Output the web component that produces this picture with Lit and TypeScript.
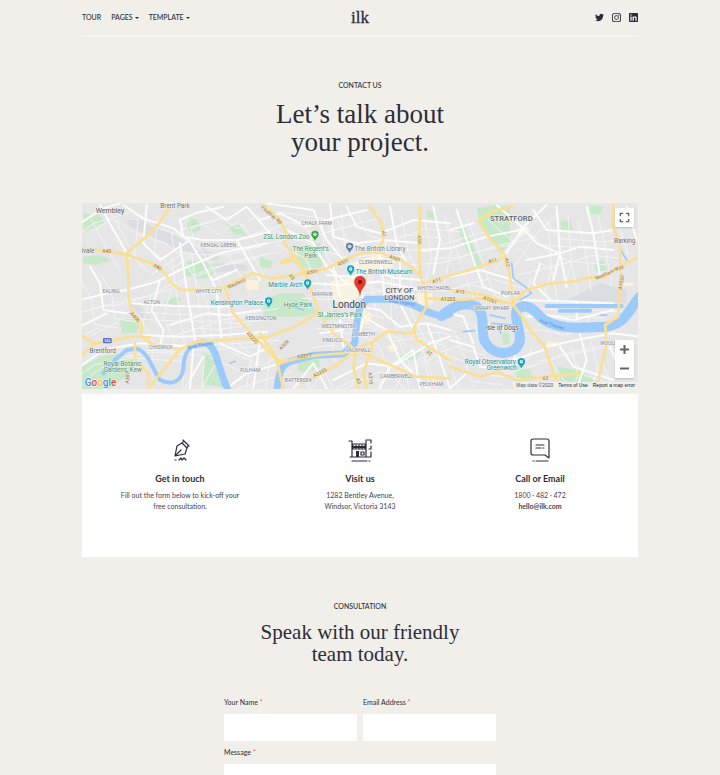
import { LitElement, html, svg, css } from "lit";
import { customElement } from "lit/decorators.js";

type Label = [text: string, x: number, y: number, kind: string, angle?: number];

const mainRoads = [
  "M270 20 L240 65 L205 105 L140 160 L145 230 L145 290 L160 345 L185 375 L182 405 L210 430 L300 448",
  "M0 145 L60 150 L135 163 L230 195 L255 220 L270 245 L300 270 L380 268 L435 262 L485 235 L520 220 L575 236 L640 226 L740 206 L790 180 L850 158 L900 158 L970 184 L1020 225 L1036 268 L1040 320 L1000 385 L1010 420 L1110 480",
  "M435 265 L460 340 L500 385 L590 480 L610 565",
  "M0 405 L45 430 L80 425 L160 408 L210 412 M0 470 L45 430",
  "M205 565 L300 448 L350 425 L420 420 L560 412 L640 382 L705 345 L720 330",
  "M165 430 L165 480 L205 520 L205 555",
  "M556 20 L596 55 L618 95 L612 130 L650 175 L680 230 L700 290 L720 345 L765 405 L815 440 L825 470",
  "M605 185 L640 170 M680 215 L640 180 L605 190",
  "M540 400 L600 490 L650 475 L720 465 L790 460 L880 425 L920 395 L1000 400",
  "M665 550 L770 495 L830 450 L1010 530 L1110 535",
  "M880 425 L850 520 L860 565 M830 450 L820 500 L835 565 M590 485 L640 480",
  "M870 20 L905 70 L910 120 L890 155 M1020 20 L1018 150 L1020 230",
  "M1036 250 L1080 235 L1170 210 L1230 190 L1275 170 M1036 295 L1140 300 L1200 295 L1300 310",
  "M1110 270 L1170 278 L1230 290 L1300 315 L1330 355 L1350 390 L1395 440 L1420 520 L1440 565",
  "M1295 20 L1235 35 L1195 62 L1225 110 L1275 165 L1288 220 L1300 310 L1335 272 L1410 250 L1480 245 L1530 232 L1565 235 L1625 195 L1680 170",
  "M1600 15 L1598 80 L1620 130 L1622 220 L1615 350 L1575 375 L1580 430 L1550 565",
  "M1110 500 L1200 530 L1250 515 L1310 540 L1400 530 L1500 520",
];

const minorRoads = [
  "M60 15 L95 80 L135 150 L150 175 M0 70 L70 25 L120 10",
  "M130 15 L190 55 L280 85 L330 125 L370 190 L410 270 L425 420",
  "M300 60 L345 40 L430 20 M300 60 L310 110 L370 120 L470 120 L570 95",
  "M140 270 L230 245 L300 210 L420 160 L560 130 M0 300 L100 275 L145 270",
  "M150 310 L280 318 L430 320 L560 300 M180 405 L300 410 L430 405 L560 395",
  "M240 240 L215 330 L250 390 L240 440 M300 130 L320 270 L345 420",
  "M30 200 L60 250 L70 330 L140 340 M0 380 L80 340 M380 20 L440 60 L500 20 L570 100",
  "M200 15 L190 130 L240 180 L330 120 M470 120 L500 170 L540 240 M400 240 L470 210",
  "M0 500 L70 450 L180 430 L330 440 M340 440 L330 565 M370 470 L330 540 M420 430 L510 470 L570 440",
  "M440 565 L500 520 L600 490 M270 375 L380 340 L440 345 L540 330 M500 385 L540 420 L520 565",
  "M540 60 L600 40 L680 80 L740 60 L860 30 M560 10 L700 30 L740 120 L790 180",
  "M620 90 L700 130 L740 200 L800 250 M750 10 L760 110 L830 130 L910 120 L1020 130",
  "M800 20 L830 80 L900 100 L1000 60 L1110 70 M930 20 L950 130 L980 190",
  "M740 225 L820 230 L870 210 L950 235 L1030 240 M690 250 L780 255 L900 245 L1020 270",
  "M760 200 L780 290 L820 310 M830 190 L850 300 M900 160 L915 300 M960 190 L960 310 L1000 390",
  "M840 320 L900 330 L960 380 L1040 370 L1110 390 M850 350 L920 390 L960 480 L1040 565",
  "M730 340 L800 350 L850 360 L830 430 M780 360 L790 440 M720 400 L790 390",
  "M640 565 L700 490 L740 565 M760 540 L860 490 L940 500 L1050 430 L1110 410",
  "M900 565 L930 500 L1000 450 L1020 565 M1040 370 L1070 450 L1110 565",
  "M1060 20 L1080 120 L1060 220 M1110 90 L1180 70 M1020 150 L1110 145 L1220 110 L1320 90 L1400 15",
  "M1110 230 L1200 210 L1300 240 M1130 30 L1180 180 L1210 260 L1280 290",
  "M1250 15 L1330 85 L1370 130 L1440 160 L1460 260 M1330 85 L1270 170 M1360 30 L1400 90 L1540 100 L1600 90",
  "M1430 20 L1440 160 L1420 240 M1340 180 L1440 160 L1500 140 L1600 150 M1520 20 L1540 100 L1560 230",
  "M1320 300 L1490 305 L1600 310 M1380 190 L1360 250 L1410 300 M1490 305 L1490 360 M1640 20 L1670 120",
  "M1340 350 L1400 345 L1480 360 L1600 330 M1400 440 L1490 420 L1600 400 L1680 410",
  "M1110 420 L1180 440 L1200 500 L1290 510 M1320 420 L1300 480 L1390 450 M1440 440 L1480 500 L1600 540",
  "M1110 340 L1150 350 L1180 430 M1500 400 L1520 480 L1490 565 M1590 440 L1620 510 M1110 565 L1160 520",
];

const parks = [
  "M10 40 L60 45 L75 65 L40 85 L10 90 Z",
  "M10 170 L60 165 L95 180 L50 195 L10 190 Z",
  "M330 55 L355 60 L362 90 L335 100 L320 80 Z",
  "M440 75 L480 75 L500 110 L460 100 Z",
  "M320 185 L370 180 L410 200 L390 235 L330 235 L305 215 Z",
  "M120 355 L160 350 L180 380 L165 400 L125 400 Z",
  "M6 500 L60 470 L120 460 L160 480 L150 520 L90 567 L6 567 Z",
  "M370 460 L410 470 L415 510 L430 560 L370 555 Z",
  "M250 310 L285 290 L305 295 L290 315 Z",
  "M655 140 L720 130 L735 180 L720 205 L670 205 L650 180 Z",
  "M550 300 L600 280 L670 280 L715 340 L660 350 L550 350 Z",
  "M655 470 L710 455 L720 500 L675 520 L655 510 Z",
  "M540 170 L580 185 L570 205 L540 200 Z",
  "M720 340 L770 330 L780 355 L730 360 Z",
  "M950 470 L1020 455 L1010 475 L960 485 Z",
  "M1190 25 L1250 15 L1290 20 L1290 130 L1260 160 L1230 110 L1200 70 Z",
  "M1130 80 L1150 75 L1180 140 L1210 200 L1190 205 L1150 130 Z",
  "M1305 495 L1350 510 L1360 540 L1310 545 Z",
  "M1430 500 L1500 510 L1560 550 L1500 567 L1440 540 Z",
  "M1440 65 L1470 60 L1480 90 L1445 90 Z",
  "M1530 15 L1570 20 L1560 45 L1530 40 Z",
  "M1265 400 L1285 395 L1290 430 L1270 435 Z",
  "M1540 190 L1570 180 L1580 210 L1550 215 Z",
  "M1040 30 L1070 40 L1065 60 L1040 55 Z",
];

const labels: Label[] = [
  ["Wembley", 90, 38, "town"],
  ["Brent Park", 285, 24, "small-town"],
  ["ivale", 24, 158, "small-town"],
  ["KENSAL GREEN", 415, 142, "area"],
  ["EALING", 93, 280, "area"],
  ["ACTON", 215, 312, "area"],
  ["WHITE CITY", 386, 278, "area"],
  ["Kensington Palace", 471, 316, "poi"],
  ["KENSINGTON", 543, 360, "area"],
  ["CHISWICK", 243, 446, "area"],
  ["Brentford", 68, 458, "small-town"],
  ["Royal Botanic", 128, 498, "park-name"],
  ["Gardens, Kew", 128, 516, "park-name"],
  ["FULHAM", 511, 515, "area"],
  ["CHALK FARM", 710, 76, "area"],
  ["ZSL London Zoo", 619, 118, "park-name"],
  ["The Regent’s", 692, 154, "park-name"],
  ["Park", 692, 173, "park-name"],
  ["The British Library", 900, 153, "library"],
  ["CLERKENWELL", 888, 192, "area"],
  ["The British Museum", 912, 221, "poi"],
  ["Marble Arch", 616, 262, "poi"],
  ["MAYFAIR", 727, 289, "area"],
  ["Hyde Park", 654, 320, "park-name"],
  ["London", 808, 324, "city"],
  ["St James’s Park", 780, 350, "park-name"],
  ["CITY OF", 958, 278, "district"],
  ["LONDON", 958, 299, "district"],
  ["WESTMINSTER", 776, 383, "area"],
  ["LAMBETH", 850, 409, "area"],
  ["PIMLICO", 757, 427, "area"],
  ["VAUXHALL", 834, 456, "area"],
  ["BATTERSEA", 655, 547, "area"],
  ["CAMBERWELL", 949, 535, "area"],
  ["PECKHAM", 1054, 559, "area"],
  ["WHITECHAPEL", 1062, 269, "area"],
  ["STRATFORD", 1294, 62, "district"],
  ["Barking", 1634, 130, "small-town"],
  ["POPLAR", 1291, 285, "area"],
  ["CANARY WHARF", 1232, 330, "area"],
  ["Isle of Dogs", 1266, 390, "small-town dark"],
  ["Royal Observatory", 1231, 491, "poi"],
  ["Greenwich", 1265, 509, "poi"],
  ["WOOLWICH", 1600, 435, "area"],
  ["A40", 80, 160, "road"],
  ["A40", 232, 206, "road", 30],
  ["A406", 165, 356, "road", 48],
  ["Westway", 470, 255, "road", -25],
  ["A3220", 517, 418, "road", 48],
  ["A307", 143, 538, "road", -82],
  ["Finchley Rd", 574, 50, "road", 40],
  ["A501", 697, 221, "road", -8],
  ["A501", 790, 192, "road", -22],
  ["A501", 945, 180, "road", 18],
  ["A5", 635, 236, "road", 52],
  ["A1", 912, 106, "road", 82],
  ["A10", 1018, 124, "road", 88],
  ["A3217", 673, 473, "road", -6],
  ["A3205", 720, 523, "road", -28],
  ["A308", 612, 440, "road", -45],
  ["A11", 1070, 247, "road", -15],
  ["A11", 1238, 187, "road", -12],
  ["A12", 1282, 192, "road", 82],
  ["A2", 1048, 464, "road", 35],
  ["A13", 1140, 280, "road", 4],
  ["A1261", 1230, 305, "road", 22],
  ["A1203", 1104, 304, "road"],
  ["A2", 1396, 540, "road", -5],
  ["A1020", 1624, 252, "road", -80],
  ["Newham Way", 1588, 222, "road", -24],
  ["A3", 836, 548, "road", 70],
  ["A215", 872, 540, "road", 85],
  ["River Thames", 966, 312, "water", 8],
  ["River Thames", 362, 440, "water", -10],
  ["River Thames", 1415, 378, "water", 18],
];

const pins: [number, number, string][] = [
  [705, 120, "#3aa548"],
  [809, 156, "#5f80a8"],
  [812, 224, "#17a5bd"],
  [683, 266, "#17a5bd"],
  [566, 320, "#17a5bd"],
  [1324, 502, "#17a5bd"],
];

@customElement("london-map")
export class LondonMap extends LitElement {
  static styles = css`
    :host {
      display: block;
      position: relative;
      height: 186px;
      overflow: hidden;
      background: #e6e6e6;
      font-family: Roboto, "Liberation Sans", sans-serif;
    }
    .canvas { display: block; width: 100%; height: 100%; }
    .park { fill: #c8e8ca; }
    .patch { fill: #dcdde0; }
    .cream { fill: #fbf3d9; }
    .road { fill: none; stroke-linejoin: round; stroke-linecap: round; }
    .minor { stroke: #fcfcfc; stroke-width: 6px; }
    .lane { stroke: #f4f4f4; stroke-width: 3px; }
    .main { stroke: #fbdf95; stroke-width: 8px; }
    .river { fill: none; stroke: #9ccbfb; stroke-linejoin: round; stroke-linecap: round; }
    .creek { stroke-width: 5px; }
    .narrow { stroke-width: 12px; }
    .medium { stroke-width: 21px; }
    .wide { stroke-width: 30px; }
    .label {
      text-anchor: middle;
      paint-order: stroke;
      stroke: #f4f4f4;
      stroke-width: 3px;
      stroke-linejoin: round;
    }
    .town { font-size: 21px; fill: #51575e; }
    .small-town { font-size: 19px; fill: #666b72; }
    .dark { fill: #4a4e54; }
    .area { font-size: 15px; fill: #7d8390; }
    .poi { font-size: 19px; fill: #218c9b; }
    .park-name { font-size: 19px; fill: #43905c; }
    .library { font-size: 19px; fill: #68819c; }
    .city { font-size: 30px; fill: #3c4046; }
    .district { font-size: 23px; font-weight: 500; fill: #5b616a; }
    .label.road { font-size: 15px; fill: #957440; stroke: none; }
    .water { font-size: 13px; fill: #5a8fd0; stroke: none; }
    .motorway { font-size: 12px; fill: #ffffff; stroke: none; }
    .google { font-size: 30px; font-weight: 500; stroke: #ffffff; stroke-width: 3px; paint-order: stroke; }
    .controls {
      position: absolute;
      inset: 5px 4px 11px auto;
      display: flex;
      flex-direction: column;
      justify-content: space-between;
    }
    .group {
      background: #ffffff;
      box-shadow: 0 1px 2px #00000030;
      border-radius: 1px;
    }
    .control {
      display: flex;
      align-items: center;
      justify-content: center;
      width: 19px;
      height: 19px;
      padding: 0;
      border: 0;
      background: none;
    }
    .glyph { width: 11px; height: 11px; fill: none; stroke: #666666; stroke-width: 2px; }
    .legal {
      position: absolute;
      right: 0;
      bottom: 0;
      display: flex;
      gap: 5px;
      padding: 0 3px;
      background: #f3f3f3cc;
      color: #555555;
      font-family: "Liberation Sans", sans-serif;
      font-size: 5px;
      line-height: 7px;
    }
    .legal a { color: #222222; text-decoration: none; }
  `;

  render() {
    return html`
      <svg class="canvas" viewBox="6 9 1668 558" preserveAspectRatio="xMidYMid slice" role="img" aria-label="Map of London">
        <path class="patch" d="M140 60 L190 60 L330 130 L420 170 L410 185 L280 140 L150 80 Z M310 200 L420 190 L500 195 L500 210 L310 225 Z M150 310 L175 310 L210 355 L195 365 Z M1560 250 L1640 270 L1640 310 L1460 300 Z" />
        ${parks.map((d) => svg`<path class="park" d=${d} />`)}
        <path class="cream" d="M500 240 h35 v30 h-35z M750 245 l70 -15 l30 30 l-30 50 l-60 -5z M1010 280 l45 0 l5 30 l-45 5z M810 190 l80 -25 l60 20 l-20 20 l-110 5z M1310 90 l30 -12 l10 15 l-30 18z M1400 425 l30 0 l0 15 l-30 0z M1630 248 h30 v10 h-30z M920 440 l25 -10 l10 15 l-20 12z M850 325 l30 20 l-15 25 l-25 -5z" />
        ${minorRoads.map((d) => svg`<path class="road lane" d=${d} transform="translate(34 26)" />`)}
        ${minorRoads.map((d) => svg`<path class="road lane" d=${d} transform="translate(-26 44)" />`)}
        ${minorRoads.map((d) => svg`<path class="road minor" d=${d} />`)}
        <path class="river narrow" d="M70 520 L105 480 L140 450 L170 446 C205 455 215 505 240 540 C285 562 312 535 311 490 C316 445 340 430 370 428" />
        <path class="river medium" d="M345 434 L370 428 C412 430 410 500 446 575 M590 575 C595 530 600 495 630 485 L700 466 L790 462 L824 430 L830 370 L840 322 L860 298 L940 298 L1000 315 L1040 335 L1085 350 L1110 342" />
        <path class="river wide" d="M1085 348 C1110 325 1150 300 1190 320 C1220 345 1200 400 1215 425 C1240 470 1305 470 1319 425 C1325 390 1300 360 1310 330 C1330 310 1355 318 1380 350 C1430 395 1520 382 1580 380 C1640 368 1645 330 1680 290" />
        <path class="river narrow" d="M1400 318 H1625 M1440 332 H1530" />
        <path class="river creek" d="M1295 190 L1300 235 L1335 260 L1355 280 L1320 300 M1230 345 L1275 355 M1235 370 L1295 375 M1260 380 L1262 400 M1150 395 L1185 392 M1620 145 L1640 180 M1560 345 h20 M450 490 l15 -6 M640 320 L670 330" />
        ${mainRoads.map((d) => svg`<path class="road main" d=${d} />`)}
        <rect x="69" y="414" width="26" height="16" rx="3" fill="#5f6fc4" />
        <text class="label motorway" x="82" y="427">M4</text>
        ${labels.map(
          ([text, x, y, kind, angle = 0]) =>
            svg`<text class="label ${kind}" x=${x} y=${y} transform="rotate(${angle} ${x} ${y - 5})">${text}</text>`,
        )}
        ${pins.map(
          ([x, y, color]) => svg`
            <g transform="translate(${x} ${y})">
              <path d="M0 3 C-3 -6 -11 -9 -11 -17 A11 11 0 0 1 11 -17 C11 -9 3 -6 0 3Z" fill=${color} />
              <circle cy="-17" r="5" fill="#ffffff" /><circle cy="-17" r="2" fill=${color} />
            </g>`,
        )}
        <path d="M840 286 C837 264 823 260 823 245 A17 17 0 0 1 857 245 C857 260 843 264 840 286Z" fill="#e8392f" stroke="#c5352b" stroke-width="1" />
        <circle cx="840" cy="246" r="6" fill="#7b1410" />
        <text class="google" x="14" y="557"><tspan fill="#4285f4">G</tspan><tspan fill="#ea4335">o</tspan><tspan fill="#fbbc05">o</tspan><tspan fill="#4285f4">g</tspan><tspan fill="#34a853">l</tspan><tspan fill="#ea4335">e</tspan></text>
      </svg>
      <div class="controls">
        <div class="group">
          <button class="control" aria-label="Toggle fullscreen">
            <svg class="glyph" viewBox="0 0 16 16"><path d="M2 6V2H6M10 2H14V6M14 10V14H10M6 14H2V10" /></svg>
          </button>
        </div>
        <div class="group">
          <button class="control" aria-label="Zoom in">
            <svg class="glyph" viewBox="0 0 11 11"><path d="M1 5.5H10M5.5 1V10" /></svg>
          </button>
          <button class="control" aria-label="Zoom out">
            <svg class="glyph" viewBox="0 0 11 11"><path d="M1 5.5H10" /></svg>
          </button>
        </div>
      </div>
      <div class="legal">
        <span>Map data ©2020</span>
        <a href="#terms">Terms of Use</a>
        <a href="#report">Report a map error</a>
      </div>
    `;
  }
}

@customElement("app-root")
export class AppRoot extends LitElement {
  static styles = css`
    :host {
      display: block;
      min-height: 100vh;
      box-sizing: border-box;
      padding: 0 82px;
      background: #f0efea;
      color: #2e2c38;
      font-family: Lato, "Liberation Sans", sans-serif;
      font-size: 7px;
      line-height: 11px;
    }
    a { color: inherit; text-decoration: none; }
    h1, h2, h3, p { margin: 0; }
    .header {
      display: grid;
      grid-template-columns: 1fr auto 1fr;
      align-items: center;
      height: 35px;
      border-bottom: 2px solid #f6f5f2;
    }
    .nav { display: flex; gap: 10px; font-weight: 500; }
    .more { display: flex; align-items: center; gap: 2px; }
    .more::after {
      content: "";
      border: 2px solid transparent;
      border-top-color: currentColor;
      border-bottom: 0;
    }
    .logo { font: 17px/22px "Liberation Serif", serif; -webkit-text-stroke: 0.3px; }
    .social { display: flex; justify-content: flex-end; gap: 8px; }
    .social a { display: flex; }
    .brand { width: 9px; height: 9px; fill: #2e2c38; }
    .intro { padding: 43px 0 47px; text-align: center; }
    .eyebrow { font-weight: 500; }
    .title { margin-top: 9px; font: 27px/28px "Liberation Serif", serif; }
    .subtitle { margin-top: 9px; font: 21px/22px "Liberation Serif", serif; }
    .cards {
      display: grid;
      grid-template-columns: repeat(3, 1fr);
      margin-top: 5px;
      padding: 43px 8px 45px;
      background: #ffffff;
      text-align: center;
    }
    .card { display: flex; flex-direction: column; align-items: center; }
    .picture { width: 26px; height: 26px; fill: none; stroke: #2e2c38; stroke-width: 1.2; stroke-linejoin: round; stroke-linecap: round; }
    .card-title { margin: 9px 0 5px; font-size: 9px; line-height: 13px; font-weight: 700; }
    .card-text { color: #45434e; }
    .strong { font-weight: 700; }
    .consult { padding-top: 44px; text-align: center; }
    .form {
      display: grid;
      grid-template-columns: 1fr 1fr;
      gap: 6px;
      max-width: 272px;
      margin: 32px auto 0;
      text-align: left;
    }
    .field { display: flex; flex-direction: column; gap: 6px; }
    .full { grid-column: 1 / -1; }
    .required { color: #f0604d; }
    .input {
      box-sizing: border-box;
      width: 100%;
      height: 27px;
      padding: 4px 8px;
      border: 0;
      border-radius: 0;
      background: #ffffff;
      font: inherit;
      resize: none;
    }
    .message { height: 80px; }
  `;

  render() {
    return html`
      <header class="header">
        <nav class="nav">
          <a href="#tour">TOUR</a>
          <a class="more" href="#pages">PAGES</a>
          <a class="more" href="#template">TEMPLATE</a>
        </nav>
        <a class="logo" href="#home">ilk</a>
        <div class="social">
          <a href="#twitter" aria-label="Twitter">
            <svg class="brand" viewBox="0 0 24 24"><path d="M23.953 4.57a10 10 0 01-2.825.775 4.958 4.958 0 002.163-2.723c-.951.555-2.005.959-3.127 1.184a4.92 4.92 0 00-8.384 4.482C7.69 8.095 4.067 6.13 1.64 3.162a4.822 4.822 0 00-.666 2.475c0 1.71.87 3.213 2.188 4.096a4.904 4.904 0 01-2.228-.616v.06a4.923 4.923 0 003.946 4.827 4.996 4.996 0 01-2.212.085 4.936 4.936 0 004.604 3.417 9.867 9.867 0 01-6.102 2.105c-.39 0-.779-.023-1.17-.067a13.995 13.995 0 007.557 2.209c9.053 0 13.998-7.496 13.998-13.985 0-.21 0-.42-.015-.63A9.935 9.935 0 0024 4.59z" /></svg>
          </a>
          <a href="#instagram" aria-label="Instagram">
            <svg class="brand" viewBox="0 0 24 24"><path fill-rule="evenodd" d="M7 0h10a7 7 0 017 7v10a7 7 0 01-7 7H7a7 7 0 01-7-7V7a7 7 0 017-7zm0 2.300A4.700 4.700 0 002.300 7v10A4.700 4.700 0 007 21.700h10a4.700 4.700 0 004.700-4.700V7A4.700 4.700 0 0017 2.300zM12 5.800a6.200 6.200 0 110 12.400 6.200 6.200 0 010-12.400zm0 2.200a4 4 0 100 8 4 4 0 000-8zM18.400 4.200a1.400 1.400 0 110 2.800 1.400 1.400 0 010-2.800z" /></svg>
          </a>
          <a href="#linkedin" aria-label="LinkedIn">
            <svg class="brand" viewBox="0 0 24 24"><path d="M20.447 20.452h-3.554v-5.569c0-1.328-.027-3.037-1.852-3.037-1.853 0-2.136 1.445-2.136 2.939v5.667H9.351V9h3.414v1.561h.046c.477-.9 1.637-1.850 3.370-1.850 3.601 0 4.267 2.370 4.267 5.455v6.286zM5.337 7.433a2.062 2.062 0 01-2.063-2.065 2.064 2.064 0 112.063 2.065zm1.782 13.019H3.555V9h3.564v11.452zM22.225 0H1.771C.792 0 0 .774 0 1.729v20.542C0 23.227.792 24 1.771 24h20.451C23.200 24 24 23.227 24 22.271V1.729C24 .774 23.200 0 22.222 0h.003z" /></svg>
          </a>
        </div>
      </header>
      <main>
        <section class="intro">
          <p class="eyebrow">CONTACT US</p>
          <h1 class="title">Let’s talk about<br />your project.</h1>
        </section>
        <london-map></london-map>
        <section class="cards">
          <article class="card">
            <svg class="picture" viewBox="0 0 26 26"><path d="M8 19L10 9L15 6L20 11L18 17L8 19L14 13M15 6L17 4M16 3L22 9M20 11L21 9M12 23L14 21L15 23L17 21L19 23M8 23H9" /></svg>
            <h3 class="card-title">Get in touch</h3>
            <p class="card-text">Fill out the form below to kick-off your<br />free consultation.</p>
          </article>
          <article class="card">
            <svg class="picture" viewBox="0 0 26 26"><path d="M2 4H5V20M5 7H18M19 4V20M19 3H24V6M24 9V12H22M24 15V20M3 20H23M5 24H20M22 24H23M6 12H18M6 8V12M9 8V12M12 8V12M15 8V12M18 8V12" /><path fill="#2e2c38" stroke="none" d="M6 9H18V11H6ZM9 14H12V20H9Z" /><path d="M14 15H17V18H14Z" /></svg>
            <h3 class="card-title">Visit us</h3>
            <p class="card-text">1282 Bentley Avenue,<br />Windsor, Victoria 3143</p>
          </article>
          <article class="card">
            <svg class="picture" viewBox="0 0 26 26"><path d="M6 2H20Q22 2 22 4V21L18 18H6Q4 18 4 16V4Q4 2 6 2M9 8H17M9 11H14M16 11H17M9 24H21M6 24H7" /></svg>
            <h3 class="card-title">Call or Email</h3>
            <p class="card-text">1800 · 482 · 472<br /><a class="strong" href="mailto:hello@ilk.com">hello@ilk.com</a></p>
          </article>
        </section>
        <section class="consult">
          <p class="eyebrow">CONSULTATION</p>
          <h2 class="subtitle">Speak with our friendly<br />team today.</h2>
          <form class="form">
            <div class="field">
              <label for="name">Your Name <span class="required">*</span></label>
              <input class="input" id="name" type="text" required />
            </div>
            <div class="field">
              <label for="email">Email Address <span class="required">*</span></label>
              <input class="input" id="email" type="email" required />
            </div>
            <div class="field full">
              <label for="message">Message <span class="required">*</span></label>
              <textarea class="input message" id="message" required></textarea>
            </div>
          </form>
        </section>
      </main>
    `;
  }
}
